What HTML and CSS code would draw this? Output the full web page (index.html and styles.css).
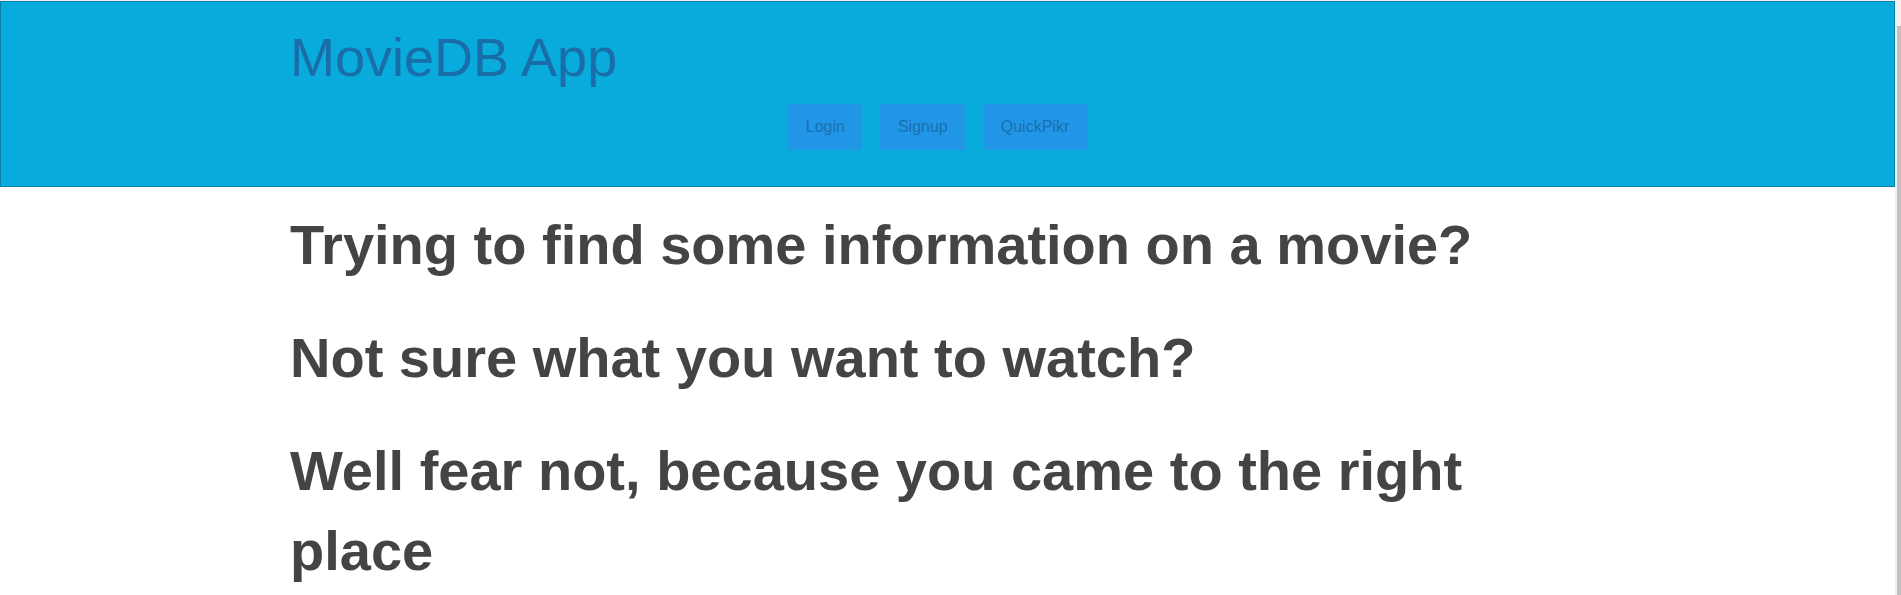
FILE: index.html
```html
<!DOCTYPE html>
<html lang="en">
<head>
<meta charset="utf-8">
<title>MovieDB App</title>
<link rel="stylesheet" href="styles.css">
</head>
<body>
<div class="page">
  <header class="site-header">
    <div class="container">
      <h1 class="brand">MovieDB App</h1>
      <nav class="nav">
        <a class="nav-btn" href="#">Login</a>
        <a class="nav-btn" href="#">Signup</a>
        <a class="nav-btn" href="#">QuickPikr</a>
      </nav>
    </div>
  </header>
  <main class="container intro">
    <h2 class="pitch">Trying to find some information on a movie?</h2>
    <h2 class="pitch">Not sure what you want to watch?</h2>
    <h2 class="pitch">Well fear not, because you came to the right place</h2>
  </main>
</div>
<div class="scrollbar"><div class="scroll-thumb"></div></div>
</body>
</html>
```

FILE: styles.css
```css
html, body {
  margin: 0;
  padding: 0;
  height: 100%;
  overflow: hidden;
  background: #ffffff;
}

body {
  font-family: "Liberation Sans", Arial, sans-serif;
  border-top: 1px solid #eeeeee;
  box-sizing: border-box;
}

.page {
  width: 1895px;
}

.site-header {
  background: #08abdb;
  border: 1px solid #0a80aa;
  height: 186px;
  box-sizing: border-box;
}

.container {
  width: 1313px;
  margin: 0 auto;
  box-sizing: border-box;
}

.brand {
  margin: 25px 0 0 -1px;
  font-size: 54px;
  line-height: 60px;
  font-weight: normal;
  color: #196da9;
}

.nav {
  display: flex;
  justify-content: center;
  margin-top: 17px;
  margin-left: -2px;
}

.nav-btn {
  display: flex;
  align-items: center;
  height: 46px;
  padding: 0 17.5px;
  margin-right: 18px;
  background: #2196e6;
  color: #1a6fae;
  font-size: 16px;
  text-decoration: none;
}

.intro {
  padding-top: 18px;
  padding-left: 0;
}

.pitch {
  margin: 0 0 33px -1px;
  font-size: 56px;
  line-height: 80px;
  font-weight: bold;
  color: #444444;
}

.scrollbar {
  position: fixed;
  top: 0;
  right: 0;
  width: 6px;
  height: 100%;
  background: #f1f1f1;
}

.scroll-thumb {
  position: absolute;
  top: 26px;
  right: 0;
  bottom: 0;
  width: 4px;
  background: #c1c1c1;
}
```
